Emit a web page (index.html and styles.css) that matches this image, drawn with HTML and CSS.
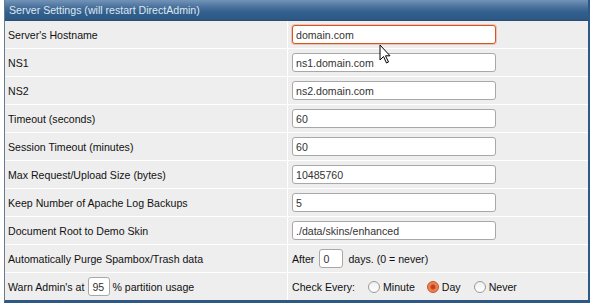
FILE: index.html
```html
<!DOCTYPE html>
<html lang="en">
<head>
    <meta charset="UTF-8">
    <title>Server Settings</title>
    <link rel="stylesheet" href="styles.css">
</head>
<body>
    <div class="panel">
        <div class="panel-header">Server Settings (will restart DirectAdmin)</div>

        <div class="row">
            <div class="label">Server's Hostname</div>
            <div class="field"><input type="text" class="text-input focused" value="domain.com"></div>
        </div>
        <div class="row">
            <div class="label">NS1</div>
            <div class="field"><input type="text" class="text-input" value="ns1.domain.com"></div>
        </div>
        <div class="row">
            <div class="label">NS2</div>
            <div class="field"><input type="text" class="text-input" value="ns2.domain.com"></div>
        </div>
        <div class="row">
            <div class="label">Timeout (seconds)</div>
            <div class="field"><input type="text" class="text-input" value="60"></div>
        </div>
        <div class="row">
            <div class="label">Session Timeout (minutes)</div>
            <div class="field"><input type="text" class="text-input" value="60"></div>
        </div>
        <div class="row">
            <div class="label">Max Request/Upload Size (bytes)</div>
            <div class="field"><input type="text" class="text-input" value="10485760"></div>
        </div>
        <div class="row">
            <div class="label">Keep Number of Apache Log Backups</div>
            <div class="field"><input type="text" class="text-input" value="5"></div>
        </div>
        <div class="row">
            <div class="label">Document Root to Demo Skin</div>
            <div class="field"><input type="text" class="text-input" value="./data/skins/enhanced"></div>
        </div>
        <div class="row">
            <div class="label">Automatically Purge Spambox/Trash data</div>
            <div class="field">After <input type="text" class="small-input" value="0"> days. (0 = never)</div>
        </div>
        <div class="row">
            <div class="label">Warn Admin's at <input type="text" class="small-input warn" value="95"> % partition usage</div>
            <div class="field">
                Check Every:
                <span class="radio"></span> Minute
                <span class="radio checked"></span> Day
                <span class="radio"></span> Never
            </div>
        </div>
    </div>

    <svg class="cursor" width="14" height="22" viewBox="0 0 14 22">
        <path d="M1 1 L1 16 L4.5 12.5 L7.5 19 L9.5 18 L6.5 11.8 L11 11.8 Z" fill="#fff" stroke="#000" stroke-width="1" stroke-linejoin="miter"/>
    </svg>
</body>
</html>
```

FILE: styles.css
```css
* {
    margin: 0;
    padding: 0;
    box-sizing: border-box;
}

body {
    background-color: #fff;
    font-family: 'Liberation Sans', Arial, sans-serif;
    font-size: 10.6px;
    color: #111;
}

.panel {
    width: 586px;
    margin-left: 4px;
    border-left: 1px solid #6b7c90;
    border-right: 2px solid #2e5986;
    border-bottom: 3px solid #2e5986;
}

.panel-header {
    height: 21px;
    padding-left: 4px;
    line-height: 21px;
    color: #dfe7f0;
    background: linear-gradient(#7394b8 0%, #4a729c 35%, #32608e 60%, #2c5783 100%);
    border-bottom: 1px solid #2a4e74;
}

.row {
    display: grid;
    grid-template-columns: 283px 1fr;
    height: 28px;
    border-top: 1px solid #fff;
    background-color: #eeeeee;
}

.panel-header + .row {
    border-top: none;
    height: 27px;
}

.label {
    display: flex;
    align-items: center;
    padding-left: 3px;
    border-right: 1px solid #fff;
}

.field {
    display: flex;
    align-items: center;
    padding-left: 4px;
}

.text-input {
    width: 204px;
    height: 19px;
    padding: 0 3px;
    border: 1px solid #a8a8a8;
    border-radius: 3px;
    background-color: #fff;
    font-family: 'Liberation Sans', Arial, sans-serif;
    font-size: 10.6px;
    color: #333;
}

.text-input.focused {
    border-color: #d9551f;
    box-shadow: 0 0 0 1px rgba(230, 120, 70, 0.35);
}

.small-input {
    width: 24px;
    height: 19px;
    margin: 0 5px 0 5px;
    padding: 0 3px;
    border: 1px solid #a8a8a8;
    border-radius: 3px;
    background-color: #fff;
    font-family: 'Liberation Sans', Arial, sans-serif;
    font-size: 10.6px;
    color: #333;
}

.small-input.warn {
    width: 22px;
    margin: 0 2px 0 4px;
}

.radio {
    display: inline-block;
    width: 12px;
    height: 12px;
    margin: 0 3px 0 13px;
    border: 1px solid #9a9a9a;
    border-radius: 50%;
    background: linear-gradient(#f0f0f0, #fff);
}

.radio.checked {
    margin-left: 12px;
    border-color: #c84f1f;
    background: radial-gradient(circle, #b8401a 0, #c4471c 2px, #ea7c4e 3px, #f0936a 100%);
}

.cursor {
    position: absolute;
    left: 379px;
    top: 44px;
}
```
